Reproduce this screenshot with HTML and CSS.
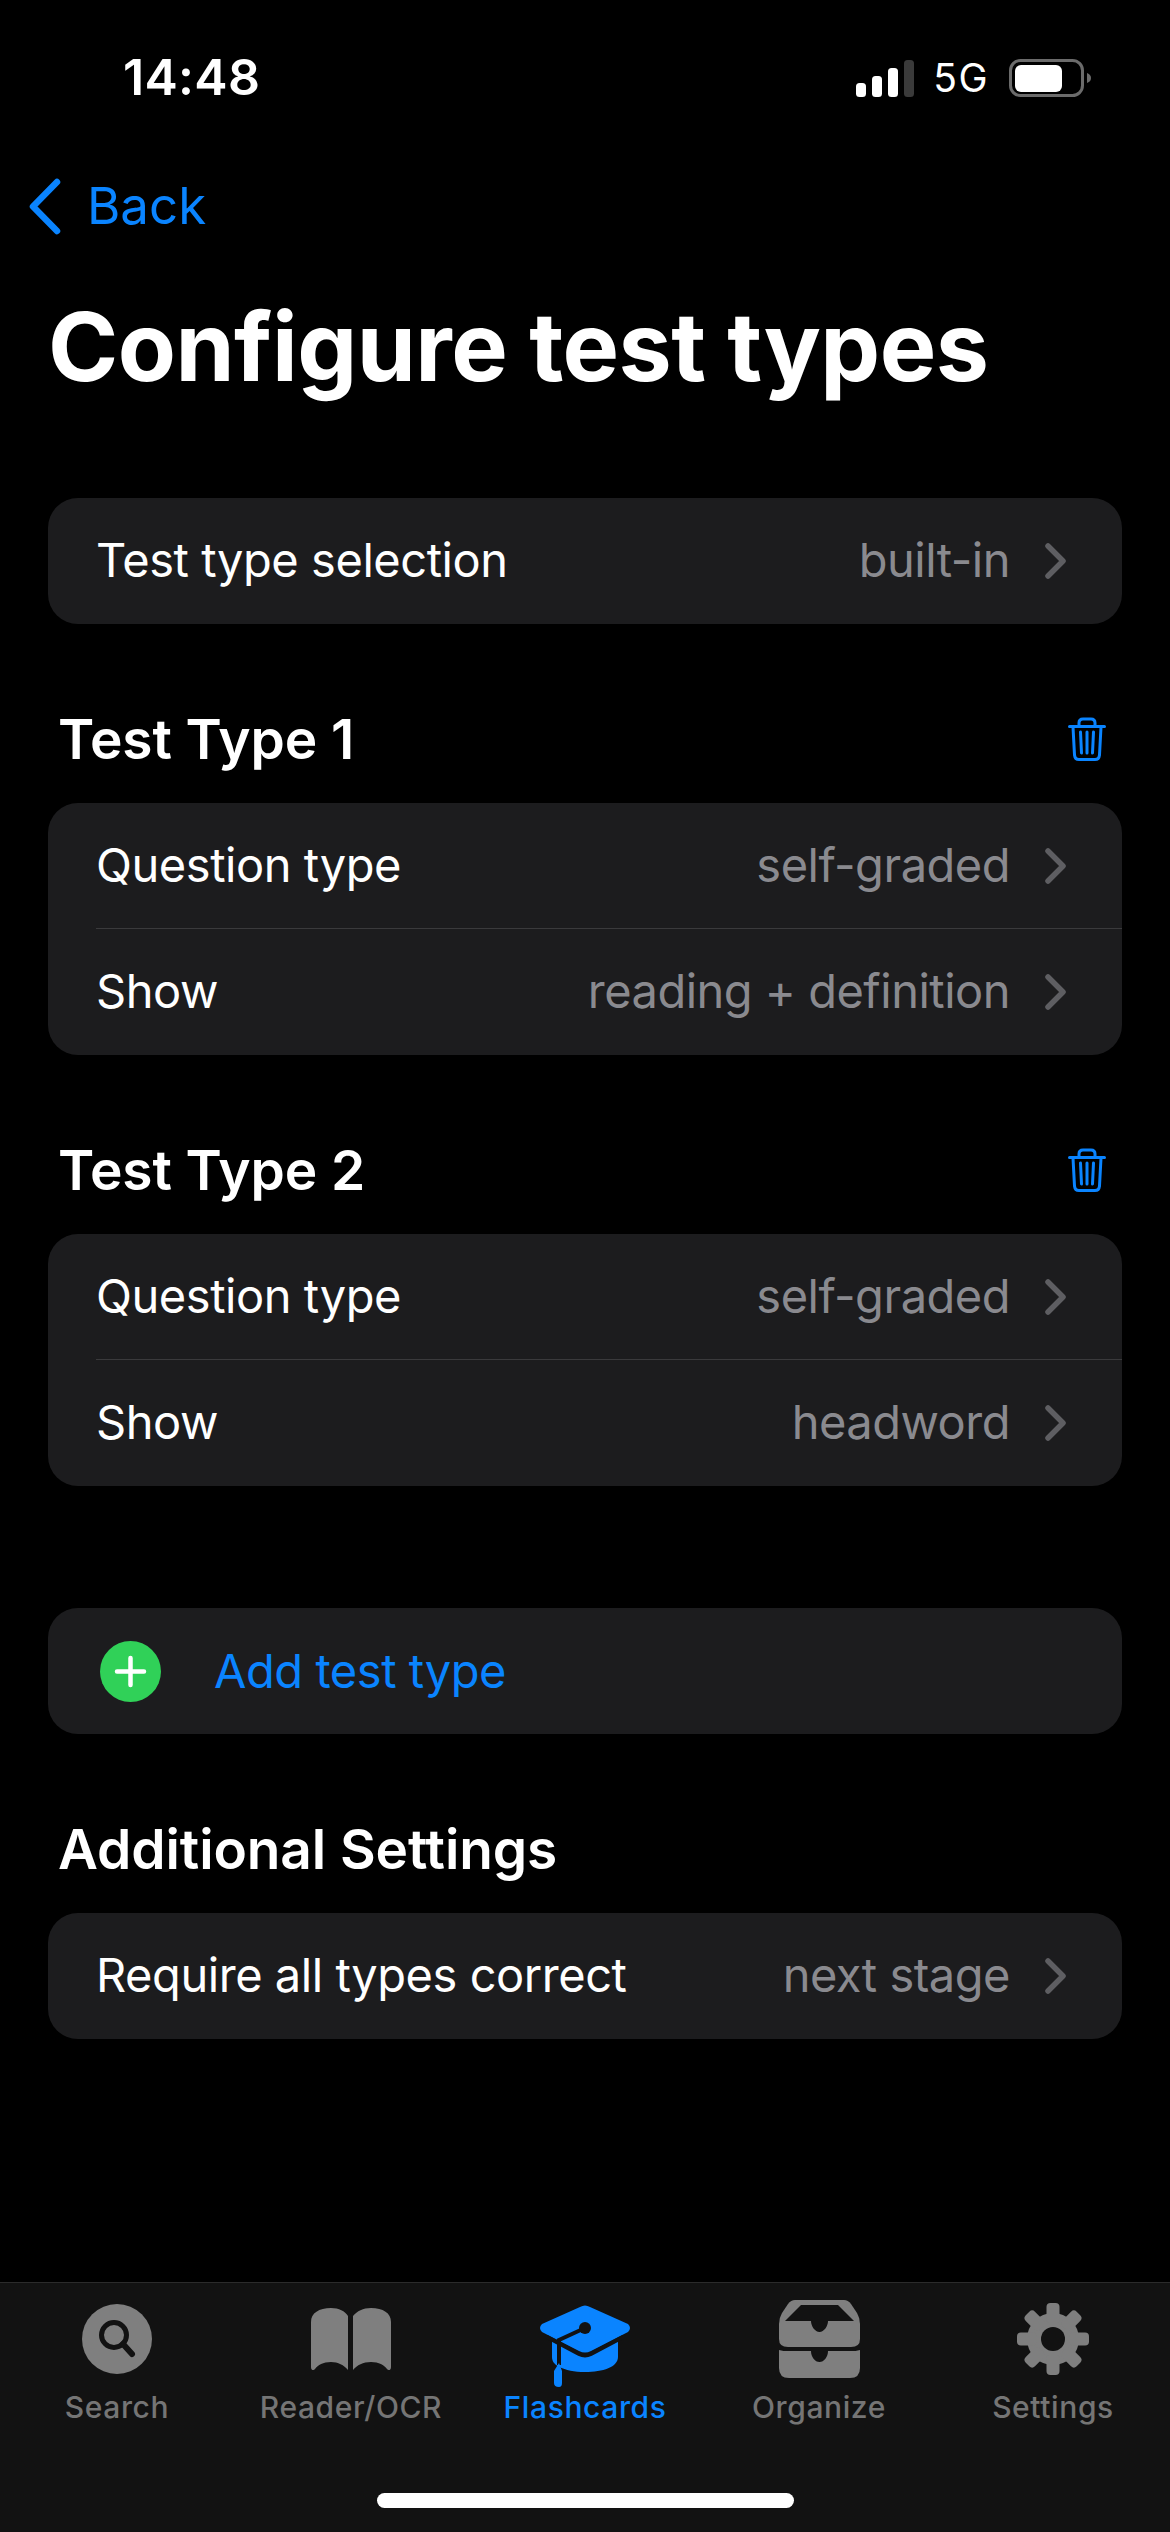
FILE: index.html
```html
<!DOCTYPE html>
<html lang="en">
<head>
<meta charset="utf-8">
<title>Configure test types</title>
<link rel="stylesheet" href="styles.css">
</head>
<body>
<div class="phone">
  <header class="status">
    <span class="time">14:48</span>
    <div class="status-right">
      <svg class="signal" width="58" height="37" viewBox="0 0 58 37"><rect x="0" y="23" width="10" height="14" rx="3.5" fill="#fff"/><rect x="16" y="16" width="10" height="21" rx="3.5" fill="#fff"/><rect x="32" y="8" width="10" height="29" rx="3.5" fill="#fff"/><rect x="48" y="0" width="10" height="37" rx="3.5" fill="#3a3a3a"/></svg>
      <span class="net">5G</span>
      <svg class="battery" width="82" height="38" viewBox="0 0 82 38"><rect x="1.5" y="1.5" width="72" height="35" rx="10" fill="none" stroke="#6b6b6b" stroke-width="3"/><rect x="6" y="6" width="47" height="27" rx="6" fill="#fff"/><path d="M78 14 C81 15 82 17 82 19 C82 21 81 23 78 24 Z" fill="#6b6b6b"/></svg>
    </div>
  </header>

  <nav class="nav">
    <svg class="back-icon" width="33" height="57" viewBox="0 0 33 57"><path d="M29 4 L5 28.500 L29 53" fill="none" stroke="#0a84ff" stroke-width="6.500" stroke-linecap="round" stroke-linejoin="round"/></svg>
    <span class="back-text">Back</span>
  </nav>

  <main class="main">
    <h1 class="title">Configure test types</h1>

    <section class="card">
      <div class="row"><span class="row-label">Test type selection</span><span class="row-value">built-in</span><svg class="chev" width="22" height="36" viewBox="0 0 22 36"><path d="M3 3 L18 18 L3 33" fill="none" stroke="#5e5e62" stroke-width="5.500" stroke-linecap="round" stroke-linejoin="round"/></svg></div>
    </section>

    <div class="section-head">
      <h2 class="section-title">Test Type 1</h2>
      <svg class="trash" width="38" height="44" viewBox="0 0 38 44"><g fill="none" stroke="#0a84ff" stroke-width="3" stroke-linecap="round"><path d="M1.500 9.500 H36.500"/><path d="M11 9 V6 Q11 2 15 2 H23 Q27 2 27 6 V9"/><path d="M5 10 L6.500 38 Q7 42.500 11 42.500 H27 Q31 42.500 31.500 38 L33 10"/><path d="M12.500 15 L13.500 36 M19 15 V36 M25.500 15 L24.500 36"/></g></svg>
    </div>
    <section class="card">
      <div class="row row-line"><span class="row-label">Question type</span><span class="row-value">self-graded</span><svg class="chev" width="22" height="36" viewBox="0 0 22 36"><path d="M3 3 L18 18 L3 33" fill="none" stroke="#5e5e62" stroke-width="5.500" stroke-linecap="round" stroke-linejoin="round"/></svg></div>
      <div class="row"><span class="row-label">Show</span><span class="row-value">reading + definition</span><svg class="chev" width="22" height="36" viewBox="0 0 22 36"><path d="M3 3 L18 18 L3 33" fill="none" stroke="#5e5e62" stroke-width="5.500" stroke-linecap="round" stroke-linejoin="round"/></svg></div>
    </section>

    <div class="section-head">
      <h2 class="section-title">Test Type 2</h2>
      <svg class="trash" width="38" height="44" viewBox="0 0 38 44"><g fill="none" stroke="#0a84ff" stroke-width="3" stroke-linecap="round"><path d="M1.500 9.500 H36.500"/><path d="M11 9 V6 Q11 2 15 2 H23 Q27 2 27 6 V9"/><path d="M5 10 L6.500 38 Q7 42.500 11 42.500 H27 Q31 42.500 31.500 38 L33 10"/><path d="M12.500 15 L13.500 36 M19 15 V36 M25.500 15 L24.500 36"/></g></svg>
    </div>
    <section class="card">
      <div class="row row-line"><span class="row-label">Question type</span><span class="row-value">self-graded</span><svg class="chev" width="22" height="36" viewBox="0 0 22 36"><path d="M3 3 L18 18 L3 33" fill="none" stroke="#5e5e62" stroke-width="5.500" stroke-linecap="round" stroke-linejoin="round"/></svg></div>
      <div class="row"><span class="row-label">Show</span><span class="row-value">headword</span><svg class="chev" width="22" height="36" viewBox="0 0 22 36"><path d="M3 3 L18 18 L3 33" fill="none" stroke="#5e5e62" stroke-width="5.500" stroke-linecap="round" stroke-linejoin="round"/></svg></div>
    </section>

    <section class="card card-add">
      <div class="row row-add">
        <svg class="plus" width="61" height="61" viewBox="0 0 61 61"><circle cx="30.500" cy="30.500" r="30.500" fill="#30d158"/><path d="M17 30.500 H44 M30.500 17 V44" stroke="#fff" stroke-width="4.500" stroke-linecap="round"/></svg>
        <span class="add-text">Add test type</span>
      </div>
    </section>

    <div class="section-head">
      <h2 class="section-title">Additional Settings</h2>
    </div>
    <section class="card">
      <div class="row"><span class="row-label">Require all types correct</span><span class="row-value">next stage</span><svg class="chev" width="22" height="36" viewBox="0 0 22 36"><path d="M3 3 L18 18 L3 33" fill="none" stroke="#5e5e62" stroke-width="5.500" stroke-linecap="round" stroke-linejoin="round"/></svg></div>
    </section>
  </main>

  <footer class="tabbar">
    <div class="tabs">
      <div class="tab">
        <div class="tab-icon">
          <svg width="70" height="70" viewBox="0 0 70 70"><circle cx="35" cy="35" r="35" fill="#7f7f7f"/><circle cx="32" cy="31" r="12.500" fill="none" stroke="#121212" stroke-width="5"/><path d="M41 40 L50 50" stroke="#121212" stroke-width="6" stroke-linecap="round"/></svg>
        </div>
        <span class="tab-label">Search</span>
      </div>
      <div class="tab">
        <div class="tab-icon">
          <svg width="80" height="62" viewBox="0 0 80 62"><path d="M0 14 C0 5 8 0 20 0 C28 0 34 3 37 8 V62 C33 57 27 54 20 54 C12 54 7 57 4 61 C2 63 0 62 0 59 Z" fill="#7f7f7f"/><path d="M80 14 C80 5 72 0 60 0 C52 0 46 3 42 8 V62 C46 57 52 54 60 54 C68 54 73 57 76 61 C78 63 80 62 80 59 Z" fill="#7f7f7f"/></svg>
        </div>
        <span class="tab-label">Reader/OCR</span>
      </div>
      <div class="tab tab-active">
        <div class="tab-icon">
          <svg class="cap" width="92" height="82" viewBox="0 0 92 82"><path d="M13 36 L46 52 L79 36 V52 C79 62 64 67 46 67 C35 67 27 65 20 62 C15 59 13 56 13 52 Z" fill="#0a84ff"/><path d="M41 2 Q46 -1 51 2 L89 19 Q93 23 89 27 L52 46 Q46 49 40 46 L3 27 Q-1 23 3 19 Z" fill="#0a84ff"/><path d="M8 32 L40 49 Q46 52 52 49 L84 32" fill="none" stroke="#121212" stroke-width="4"/><path d="M46 23 L20 35 V60" fill="none" stroke="#121212" stroke-width="4"/><circle cx="46" cy="23" r="6" fill="#121212"/><path d="M20 58 L23 66 V78 Q23 82 20 82 Q15 82 15 78 V66 Z" fill="#0a84ff"/></svg>
        </div>
        <span class="tab-label">Flashcards</span>
      </div>
      <div class="tab">
        <div class="tab-icon">
          <svg width="81" height="78" viewBox="0 0 81 78"><path d="M16 0 H65 Q69 0 72 4 L78 13 Q81 18 81 24 V39 Q81 47 72 47 H9 Q0 47 0 39 V24 Q0 18 3 13 L9 4 Q12 0 16 0 Z" fill="#7f7f7f"/><path d="M22 5 H59 L75 21 H49 C49 26 45 32 40.500 32 C36 32 32 26 32 21 H6 Z" fill="#121212"/><path d="M0 50 C3 51 6 51 9 51 H32 C32 57 36 62 40.500 62 C45 62 49 57 49 51 H72 C75 51 78 51 81 50 V68 Q81 78 71 78 H10 Q0 78 0 68 Z" fill="#7f7f7f"/></svg>
        </div>
        <span class="tab-label">Organize</span>
      </div>
      <div class="tab">
        <div class="tab-icon">
          <svg width="72" height="72" viewBox="-36 -36 72 72"><g fill="#7f7f7f"><circle r="26"/><rect x="-6.500" y="-36" width="13" height="20" rx="4"/><rect x="-6.500" y="-36" width="13" height="20" rx="4" transform="rotate(45)"/><rect x="-6.500" y="-36" width="13" height="20" rx="4" transform="rotate(90)"/><rect x="-6.500" y="-36" width="13" height="20" rx="4" transform="rotate(135)"/><rect x="-6.500" y="-36" width="13" height="20" rx="4" transform="rotate(180)"/><rect x="-6.500" y="-36" width="13" height="20" rx="4" transform="rotate(225)"/><rect x="-6.500" y="-36" width="13" height="20" rx="4" transform="rotate(270)"/><rect x="-6.500" y="-36" width="13" height="20" rx="4" transform="rotate(315)"/></g><circle r="12" fill="#121212"/></svg>
        </div>
        <span class="tab-label">Settings</span>
      </div>
    </div>
    <div class="home"></div>
  </footer>
</div>
</body>
</html>
```

FILE: styles.css
```css
* { box-sizing: border-box; }
html, body { margin: 0; padding: 0; background: #000; }
body { font-family: Inter, "Liberation Sans", sans-serif; color: #fff; }
.phone { width: 1170px; height: 2532px; display: flex; flex-direction: column; background: #000; overflow: hidden; }

.status { height: 154px; flex: none; display: flex; justify-content: space-between; align-items: flex-start; padding: 54px 79px 0 123px; }
.time { font-size: 50px; font-weight: 600; letter-spacing: 0.3px; line-height: 46px; }
.status-right { display: flex; align-items: center; padding-top: 5px; }
.signal { margin-right: 19px; }
.net { font-size: 39px; font-weight: 400; line-height: 38px; letter-spacing: 1.5px; margin-right: 20px; }
.battery { display: block; }

.nav { height: 104px; flex: none; display: flex; align-items: center; padding-left: 28px; }
.back-text { font-size: 51px; color: #0a84ff; margin-left: 26px; line-height: 60px; }

.main { flex: 1; padding: 0 48px; }
.title { margin: 0; height: 240px; padding-top: 31px; font-size: 95px; font-weight: 700; letter-spacing: -0.55px; line-height: 116px; }

.card { background: #1c1c1e; border-radius: 30px; }
.row { height: 126px; display: flex; align-items: center; padding: 0 55px 0 48px; position: relative; }
.row-line::after { content: ""; position: absolute; left: 48px; right: 0; bottom: 0; height: 1px; background: #3a3a3c; }
.row-label { font-size: 47px; letter-spacing: -0.45px; line-height: 56px; margin-bottom: 3px; flex: 1; white-space: nowrap; }
.row-value { font-size: 47px; letter-spacing: -0.5px; line-height: 56px; margin-bottom: 3px; color: #8a8a8f; margin-right: 35px; white-space: nowrap; }
.chev { display: block; }

.section-head { margin-top: 92px; height: 87px; padding: 0 16px 38px 10px; display: flex; justify-content: space-between; align-items: center; }
.section-title { margin: 0 0 3px; font-size: 55px; font-weight: 600; letter-spacing: -0.1px; line-height: 46px; }
.trash { margin-bottom: 3px; }

.card-add { margin-top: 122px; }
.row-add { padding-left: 52px; }
.add-text { font-size: 47px; letter-spacing: -0.45px; line-height: 56px; margin-bottom: 1px; color: #0a84ff; margin-left: 53px; }

.tabbar { height: 250px; flex: none; background: #121212; border-top: 1px solid #2b2b2b; display: flex; flex-direction: column; }
.tabs { display: grid; grid-template-columns: repeat(5, 234px); }
.tab { display: flex; flex-direction: column; align-items: center; color: #757575; }
.tab-active { color: #0a84ff; }
.tab-icon { height: 104px; display: flex; align-items: center; justify-content: center; padding-top: 8px; }
.cap { margin-top: 14px; }
.tab-label { font-size: 30px; line-height: 36px; margin-top: 2px; font-weight: 500; letter-spacing: 0.6px; white-space: nowrap; }
.home { width: 417px; height: 15px; background: #fff; border-radius: 8px; margin: 68px auto 0; }
```
